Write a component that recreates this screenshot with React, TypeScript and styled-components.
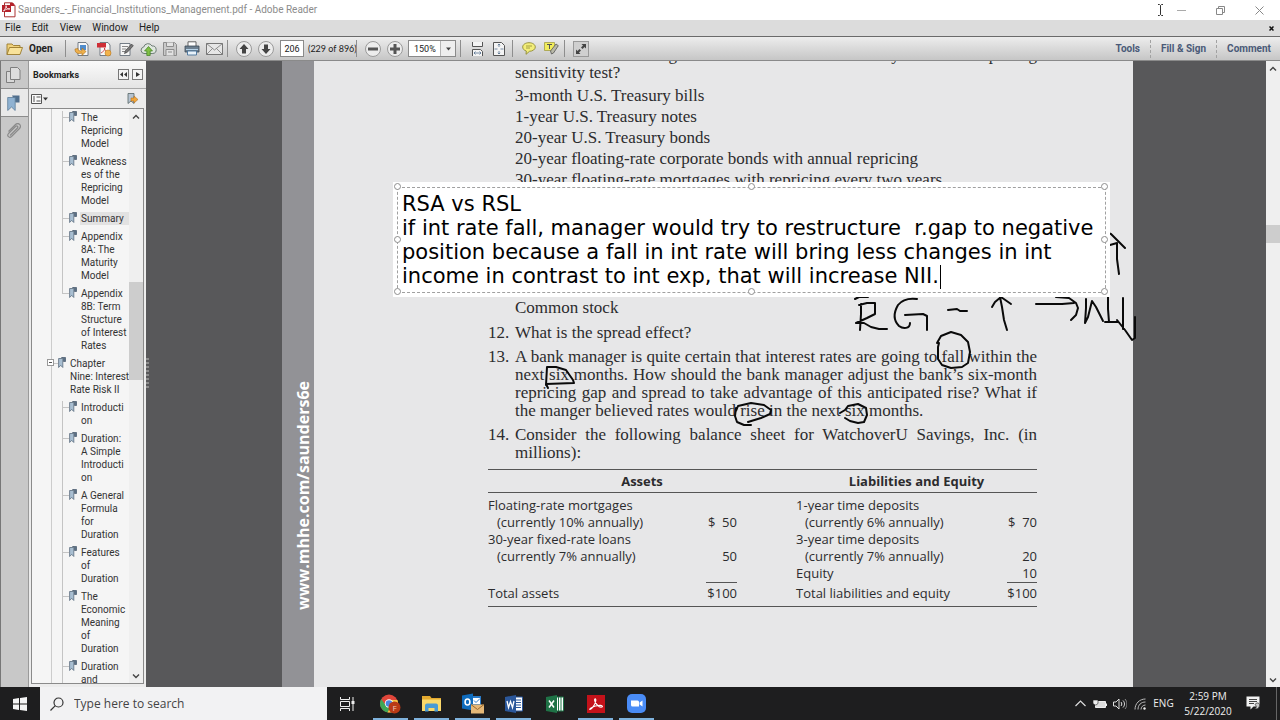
import React from 'react';
import styled, { createGlobalStyle, css } from 'styled-components';

const ui = '"Open Sans", "Noto Sans", sans-serif';
const chrome = 'Roboto, "Open Sans", sans-serif';
const serif = '"Liberation Serif", serif';
const verdana = '"DejaVu Sans", sans-serif';

const GlobalStyle = createGlobalStyle`
  * { box-sizing: border-box; }
  body { margin: 0; background: #58585a; font-family: ${ui}; }
  button, input, select, textarea { font: inherit; color: inherit; margin: 0; padding: 0; border: 0; border-radius: 0; background: none; outline: 0; }
  ul, ol { list-style: none; margin: 0; padding: 0; }
  svg { display: block; flex: none; }
  a { color: inherit; text-decoration: none; }
`;

const Shell = styled.div`
  display: flex;
  flex-direction: column;
  height: 100vh;
  overflow: hidden;
`;

/* ---------- window chrome ---------- */

const TitleBar = styled.header`
  display: flex;
  align-items: center;
  flex: none;
  height: 20px;
  padding: 0 15px 0 2px;
  gap: 2px;
  background: #fff;
  color: #8c8c8c;
  font-family: ${chrome};
  line-height: 16px;
`;
const WindowTitle = styled.h1`
  flex: 1;
  margin: 0;
  font-size: 10px;
  font-weight: 400;
  white-space: nowrap;
`;
const WindowButtons = styled.div`
  display: flex;
  align-items: center;
  gap: 27px;
  padding-left: 9px;
`;
const ChromeButton = styled.button`
  display: flex;
  align-items: center;
  justify-content: center;
  width: 12px;
  height: 14px;
`;
const MenuBar = styled.nav`
  display: flex;
  align-items: center;
  flex: none;
  height: 16px;
  padding: 0 5px;
  gap: 11px;
  background: #dcdcdc;
  color: #222;
  font-family: ${chrome};
  font-size: 10px;
  line-height: 16px;
`;
const MenuClose = styled(ChromeButton)`
  margin-left: auto;
  width: 8px;
`;

/* ---------- toolbar ---------- */

const Toolbar = styled.div`
  display: flex;
  align-items: center;
  flex: none;
  height: 25px;
  padding: 0 9px 0 6px;
  border-top: 1px solid #6a6a6a;
  border-bottom: 1px solid #8a8a8a;
  background: linear-gradient(#ededed, #c6c6c6);
  font-family: ${chrome};
  font-size: 10px;
  line-height: 14px;
  color: #222;
`;
const OpenButton = styled.button`
  display: flex;
  align-items: center;
  gap: 6px;
  width: 57px;
  font-weight: 700;
`;
const Divider = styled.span`
  flex: none;
  width: 1px;
  height: 17px;
  margin: 0 5px 0 2px;
  background: #8e8e8e;
`;
const Tool = styled.button`
  display: flex;
  align-items: center;
  justify-content: center;
  flex: none;
  width: 22px;
  height: 22px;
`;
const RoundTool = styled(Tool)`
  width: 16px;
  height: 16px;
  margin: 0 3px;
  border: 1px solid #9a9a9a;
  border-radius: 50%;
  background: #ececec;
`;
const BoxedTool = styled(Tool)`
  width: 16px;
  height: 16px;
  margin: 0 3px;
  border: 1px solid #999;
  background: #cfcfcf;
`;
const PageInput = styled.input`
  flex: none;
  width: 24px;
  height: 17px;
  margin: 0 4px 0 3px;
  border: 1px solid #8a8a8a;
  background: #fff;
  text-align: center;
  font-size: 9px;
`;
const PageCount = styled.span`
  flex: none;
  width: 46px;
  font-family: Lato, ${chrome};
  font-size: 9px;
  white-space: nowrap;
`;
const ZoomBox = styled.label`
  display: flex;
  align-items: center;
  flex: none;
  width: 48px;
  height: 17px;
  margin: 0 2px;
  border: 1px solid #8a8a8a;
  background: #fff;
`;
const ZoomSelect = styled.select`
  appearance: none;
  flex: 1;
  min-width: 0;
  height: 15px;
  padding-left: 5px;
  font-size: 9px;
`;
const ZoomArrow = styled.span`
  display: flex;
  align-items: center;
  justify-content: center;
  width: 15px;
  height: 15px;
  border-left: 1px solid #b5b5b5;
  background: #eee;
`;
const TaskLinks = styled.div`
  display: flex;
  margin-left: auto;
`;
const TaskLink = styled.button`
  height: 18px;
  padding: 0 10px;
  color: #4a5a78;
  font-size: 10px;
  font-weight: 700;
  white-space: nowrap;
  & + & { border-left: 1px dashed #a2a2a2; }
  &:last-child { padding-right: 0; }
`;

/* ---------- side panel ---------- */

const Workspace = styled.div`
  display: flex;
  flex: 1;
  min-height: 0;
  background: #58585a;
`;
const TabStrip = styled.nav`
  display: flex;
  flex-direction: column;
  flex: none;
  width: 28px;
  border-left: 1px solid #777;
  background: #c8c8c8;
`;
const PanelTab = styled.button<{ $active?: boolean }>`
  display: flex;
  align-items: center;
  justify-content: center;
  height: 28px;
  padding-right: 3px;
  border-bottom: 1px solid #8c8c8c;
  ${p => p.$active && css`background: #e9e9e9;`}
  &:last-child { border-bottom: 0; }
`;
const Panel = styled.aside`
  display: flex;
  flex-direction: column;
  flex: none;
  width: 118px;
  border-left: 1px solid #9a9a9a;
  background: #ececec;
  font-family: ${chrome};
`;
const PanelHeader = styled.div`
  display: flex;
  align-items: center;
  flex: none;
  gap: 3px;
  height: 28px;
  padding: 0 3px 0 4px;
  border-bottom: 1px solid #a8a8a8;
  background: linear-gradient(#fafafa, #e4e4e4);
`;
const PanelTitle = styled.h2`
  flex: 1;
  margin: 0;
  color: #222;
  font-size: 9px;
  line-height: 14px;
  font-weight: 700;
`;
const SmallButton = styled.button`
  display: flex;
  align-items: center;
  justify-content: center;
  width: 11px;
  height: 11px;
  border: 1px solid #777;
  background: #f4f4f4;
`;
const PanelTools = styled.div`
  display: flex;
  align-items: center;
  justify-content: space-between;
  flex: none;
  height: 19px;
  padding: 0 8px 0 2px;
`;
const TreeBox = styled.div`
  display: flex;
  flex: 1;
  min-height: 0;
  margin: 0 2px 3px 2px;
  border: 1px solid #8a8a8a;
  background: #f5f5f5;
`;
const Tree = styled.div`
  flex: 1;
  min-width: 0;
  overflow: hidden;
  padding-left: 19px;
  color: #333;
  font-size: 10px;
  line-height: 13px;
`;
const Trunk = styled.div`
  padding-top: 2px;
  border-left: 1px solid #ccc;
`;
const BranchList = styled.ul`
  padding-left: 10px;
`;
const Connector = styled.span`
  flex: none;
  width: 6px;
  height: 7px;
  border-bottom: 1px solid #c4c4c4;
`;
const Leaf = styled.li<{ $end?: boolean }>`
  display: flex;
  align-items: flex-start;
  padding-bottom: 5px;
  border-left: 1px solid ${p => (p.$end ? 'transparent' : '#c4c4c4')};
  ${p => p.$end && css`
    ${Connector} { width: 7px; margin-left: -1px; border-left: 1px solid #c4c4c4; }
  `}
`;
const Chapter = styled.div`
  display: flex;
  align-items: flex-start;
  margin-left: -5px;
  padding-bottom: 5px;
  ${Connector} { width: 4px; }
`;
const Toggle = styled.button`
  display: flex;
  align-items: center;
  justify-content: center;
  flex: none;
  width: 7px;
  height: 7px;
  margin-top: 2px;
  border: 1px solid #999;
  background: #fff;
`;
const BookmarkText = styled.a<{ $selected?: boolean }>`
  flex: 1;
  margin-left: 3px;
  padding-left: 1px;
  white-space: nowrap;
  ${p => p.$selected && css`background: #e2e2e2;`}
`;
const Line = styled.span`
  display: block;
`;
const ScrollTrack = styled.div`
  display: flex;
  flex-direction: column;
  align-items: center;
  justify-content: space-between;
  flex: none;
  width: 14px;
  background: #efefef;
`;
const ScrollArrow = styled.button`
  display: flex;
  align-items: center;
  justify-content: center;
  width: 14px;
  height: 15px;
`;
const ScrollRun = styled.div<{ $before: number; $after: number }>`
  display: grid;
  flex: 1;
  align-self: stretch;
  grid-template-rows: ${p => p.$before}fr ${p => 100 - p.$before - p.$after}fr ${p => p.$after}fr;
`;
const ScrollThumb = styled.span`
  grid-row: 2;
  background: #cdcdcd;
`;
const Splitter = styled.div`
  display: flex;
  align-items: center;
  flex: none;
  width: 3px;
`;
const Grip = styled.span`
  width: 3px;
  height: 32px;
  background: repeating-linear-gradient(#8c8c8c 0 2px, transparent 2px 4px);
`;

/* ---------- document ---------- */

const Viewer = styled.main`
  display: flex;
  justify-content: center;
  flex: 1;
  min-width: 0;
  overflow: hidden;
`;
const Sheet = styled.article`
  position: relative;
  display: flex;
  flex: none;
  width: 851px;
  height: 100%;
`;
const Spine = styled.div`
  display: flex;
  justify-content: center;
  flex: none;
  width: 32px;
  padding-top: 320px;
  padding-left: 9px;
  background: #929296;
`;
const SpineLink = styled.a`
  align-self: flex-start;
  writing-mode: vertical-rl;
  transform: rotate(180deg);
  color: #fff;
  font-size: 16px;
  line-height: 16px;
  font-weight: 700;
  white-space: nowrap;
`;
const Paper = styled.div`
  flex: 1;
  padding: 0 96px 0 174px;
  background: #e7e7e8;
  color: #2c2c2e;
  font-family: ${serif};
  font-size: 17px;
  line-height: 18px;
`;
const Question = styled.li<{ $clipped?: boolean }>`
  display: grid;
  grid-template-columns: 27px 1fr;
  margin-bottom: 6px;
  ${p => p.$clipped && css`margin-top: -15px;`}
`;
const QuestionBody = styled.div`
  grid-column: 2;
`;
const Justified = styled.span<{ $last?: boolean }>`
  display: block;
  white-space: nowrap;
  text-align-last: ${p => (p.$last ? 'left' : 'justify')};
`;
const Choices = styled.ul`
  padding-top: 3px;
  line-height: 21px;
`;
const LastChoice = styled.li`
  margin-top: 107px;
`;
const Sheets = styled.table`
  width: 100%;
  margin-top: 7px;
  border-collapse: collapse;
  table-layout: fixed;
  border-top: 1px solid #555;
  border-bottom: 1px solid #555;
  font-family: ${ui};
  font-size: 13px;
  line-height: 17px;
  th { height: 23px; padding: 0; border-bottom: 1px solid #555; font-weight: 700; }
  td { padding: 0; white-space: nowrap; }
  tbody tr:first-child td { padding-top: 4px; }
`;
const Amount = styled.td`
  text-align: right;
  white-space: pre !important;
`;
const Detail = styled.td`
  text-indent: 9px;
`;
const TotalRow = styled.tr`
  td { padding: 2px 0 4px; }
  ${Amount} { border-top: 1px solid #555; }
`;
const Ink = styled.svg`
  position: absolute;
  top: 0;
  left: 0;
  overflow: visible;
  pointer-events: none;
`;
const Note = styled.div`
  position: absolute;
  top: 121px;
  left: 111px;
  width: 717px;
  padding: 5px 4px 4px;
  background: #fff;
`;
const NoteText = styled.textarea`
  display: block;
  width: 100%;
  height: 106px;
  padding: 4px 4px;
  border: 1px dashed #a0a0a0;
  resize: none;
  overflow: hidden;
  color: #000;
  font-family: ${verdana};
  font-size: 21px;
  line-height: 24px;
  white-space: pre;
`;
const Handle = styled.span<{ $x: 0 | 50 | 100; $y: 0 | 50 | 100 }>`
  position: absolute;
  left: calc(5px + (100% - 10px) * ${p => p.$x / 100});
  top: calc(5px + (100% - 10px) * ${p => p.$y / 100});
  width: 7px;
  height: 7px;
  margin: -4px;
  border: 1px solid #8e8e8e;
  border-radius: 50%;
  background: #fff;
`;
const Caret = styled.span`
  position: absolute;
  left: 547px;
  bottom: 8px;
  width: 1px;
  height: 24px;
  background: #000;
`;

/* ---------- taskbar ---------- */

const Taskbar = styled.footer`
  display: flex;
  align-items: stretch;
  flex: none;
  height: 33px;
  background: #1e1e1f;
  color: #eee;
`;
const TaskButton = styled.button<{ $open?: boolean }>`
  display: flex;
  align-items: center;
  justify-content: center;
  flex: none;
  width: 35px;
  margin: 0 3px;
  border-top: 2px solid transparent;
  border-bottom: 2px solid ${p => (p.$open ? '#7fb2dc' : 'transparent')};
`;
const StartButton = styled(TaskButton)`
  width: 40px;
  margin: 0;
`;
const AppList = styled.div`
  display: flex;
  align-items: stretch;
  margin-left: 2px;
`;
const SearchBox = styled.label`
  display: flex;
  align-items: center;
  flex: none;
  gap: 10px;
  width: 287px;
  padding-left: 10px;
  background: #f2f2f3;
  color: #333;
`;
const SearchInput = styled.input`
  flex: 1;
  min-width: 0;
  font-size: 12px;
  line-height: 16px;
  &::placeholder { color: #444; opacity: 1; }
`;
const Tray = styled.div`
  display: flex;
  align-items: center;
  margin-left: auto;
  font-size: 10px;
  line-height: 15px;
`;
const TrayButton = styled.button`
  display: flex;
  align-items: center;
  justify-content: center;
  width: 20px;
  height: 33px;
`;
const Language = styled(TrayButton)`
  width: 27px;
`;
const Clock = styled.time`
  width: 62px;
  text-align: center;
`;
const Notices = styled(TrayButton)`
  width: 28px;
`;
const ShowDesktop = styled.button`
  width: 4px;
  height: 33px;
  margin-left: 9px;
  border-left: 1px solid #666;
`;

/* ---------- drawings ---------- */

const BookmarkIcon = () => (
  <svg width="8" height="11" viewBox="0 0 8 11">
    <path d="M3.5.5h4v4h-2v-3z" fill="#5b7085" stroke="#46586b" strokeWidth=".7" />
    <path d="M.6 1.5h4.2v9L2.7 8.4.6 10.5z" fill="#a9bfd2" stroke="#5a6c7e" strokeWidth=".8" />
  </svg>
);

const Chevron = ({ up }: { up?: boolean }) => (
  <svg width="8" height="6" viewBox="0 0 8 6" fill="none" stroke="#444" strokeWidth="1.4">
    <path d={up ? 'M1 4.5 4 1.5l3 3' : 'M1 1.5l3 3 3-3'} />
  </svg>
);

const PageSheet = () => <path d="M4 1.5h8l2 2.500v10.500H4z" fill="#f8f8f8" stroke="#66707a" strokeWidth=".9" />;

const PenStroke = styled.g`
  fill: none;
  stroke: #0a0a0a;
  stroke-width: 2px;
  stroke-linecap: round;
  stroke-linejoin: round;
`;

const Handwriting = () => (
  <Ink width="856" height="626" viewBox="282 61 856 626" aria-hidden="true">
    <PenStroke>
      <path d="M1108 233l3 1 14 14M1110 245l7-2M1117 243v16l2 15" />
      <path d="M855 299l4-2h9M861 304v10l-1 16M859 305l8-2 8 0 0 11-8 4-11 5h8l7 4 8 2 8 0" />
      <path d="M917 299c-8-1-15 1-19 6-4 7-5 15 1 21 4 3 11 3 11-3M905 315l18-1 4 2v14" />
      <path d="M948 310l9-1 3 2h7" />
      <path d="M1000 297l2 10 2 13 3 10M992 307l3-5 6-5 10 7" />
      <path d="M1036 304h26l12-1M1056 297l13 1 7 5 2 5-2 7-5 5" />
      <path d="M1086 299v9l-1 15 3-6 4-16 4 6 7 14M1108 297v12l1 13M1105 322h13M1123 298v31M1117 320l8 10 7 10 3-2v-21" />
      <path d="M937 343l4-7 10-4 10 3 7 7 2 10-2 11-6 4-11 1-9-3-4-6v-12l1-4" />
      <path d="M546 385l1-18 9 0 10 3 7 10 1 3-28 1 2 4" />
      <path d="M736 411l2-5 13-3 13 2 7 5-1 4-9 4-13 4M751 425h-7l-7-3-2-6 1-8" />
      <path d="M840 413l5-3 3-4 10-2 8 4 1 7-3 7-6 1-8-2-5-3" />
    </PenStroke>
  </Ink>
);

/* ---------- data ---------- */

const chapterEight = [
  ['The', 'Repricing', 'Model'],
  ['Weakness', 'es of the', 'Repricing', 'Model'],
  ['Summary'],
  ['Appendix', '8A: The', 'Maturity', 'Model'],
  ['Appendix', '8B: Term', 'Structure', 'of Interest', 'Rates'],
];
const chapterNine = [
  ['Introducti', 'on'],
  ['Duration:', 'A Simple', 'Introducti', 'on'],
  ['A General', 'Formula', 'for', 'Duration'],
  ['Features', 'of', 'Duration'],
  ['The', 'Economic', 'Meaning', 'of', 'Duration'],
  ['Duration', 'and'],
];

const noteText = [
  'RSA vs RSL',
  'if int rate fall, manager would try to restructure  r.gap to negative',
  'position because a fall in int rate will bring less changes in int',
  'income in contrast to int exp, that will increase NII.',
].join('\n');

const handles: [0 | 50 | 100, 0 | 50 | 100][] = [
  [0, 0], [50, 0], [100, 0], [0, 50], [100, 50], [0, 100], [50, 100], [100, 100],
];

const Branches = ({ items, open }: { items: string[][]; open?: boolean }) => (
  <BranchList>
    {items.map((lines, i) => (
      <Leaf key={i} $end={!open && i === items.length - 1}>
        <Connector />
        <BookmarkIcon />
        <BookmarkText href="#" $selected={lines[0] === 'Summary'}>
          {lines.map((l, n) => <Line key={n}>{l}</Line>)}
        </BookmarkText>
      </Leaf>
    ))}
  </BranchList>
);

/* ---------- sections ---------- */

const TopBars = () => (
  <>
    <TitleBar>
      <svg width="14" height="16" viewBox="0 0 14 16">
        <path d="M2.5.8h8l2.5 3v11H2.5z" fill="#fff" stroke="#a33" />
        <path d="M0 3h9v7H0z" fill="#b5222b" />
        <path d="M1.5 9C3 7 4.500 5 4.300 4c-.4-1-.9.4.4 2 1 1.200 3 1.500 3.300.8-.5-.6-4 .2-6.500 2.200z" fill="none" stroke="#fff" strokeWidth=".8" />
        <path d="M8 1h3l2 3h-5z" fill="#b5222b" />
      </svg>
      <WindowTitle>Saunders_-_Financial_Institutions_Management.pdf - Adobe Reader</WindowTitle>
      <svg width="7" height="12" viewBox="0 0 7 12" fill="none" stroke="#333">
        <path d="M1 .5h1.500l1 1 1-1H6M3.500 1.500v9M1 11.500h1.500l1-1 1 1H6" />
      </svg>
      <WindowButtons>
        <ChromeButton aria-label="Minimize">
          <svg width="9" height="9" viewBox="0 0 9 9"><path d="M0 4.500h9" stroke="#aaa" /></svg>
        </ChromeButton>
        <ChromeButton aria-label="Restore">
          <svg width="9" height="9" viewBox="0 0 9 9" fill="none" stroke="#888"><path d="M.5 2.500h6v6h-6zM2.500 2.500v-2h6v6h-2" /></svg>
        </ChromeButton>
        <ChromeButton aria-label="Close">
          <svg width="9" height="9" viewBox="0 0 9 9" stroke="#888"><path d="M.5.5l8 8M8.500.5l-8 8" /></svg>
        </ChromeButton>
      </WindowButtons>
    </TitleBar>
    <MenuBar>
      {['File', 'Edit', 'View', 'Window', 'Help'].map(m => <button key={m}>{m}</button>)}
      <MenuClose aria-label="Close document">
        <svg width="5" height="5" viewBox="0 0 5 5" stroke="#111" strokeWidth="1.500"><path d="M.5.5l4 4M4.500.5l-4 4" /></svg>
      </MenuClose>
    </MenuBar>
  </>
);

const ReaderToolbar = () => (
  <Toolbar role="toolbar">
    <OpenButton>
      <svg width="17" height="14" viewBox="0 0 17 14">
        <path d="M1 12.500V2h5l1.500 1.500H14V6" fill="#f0d27c" stroke="#9a7a2c" strokeWidth=".9" />
        <path d="M1 12.500 3.500 5.500h13L14 12.500z" fill="#f8e29a" stroke="#9a7a2c" strokeWidth=".9" />
      </svg>
      Open
    </OpenButton>
    <Divider />
    <Tool aria-label="Convert file to PDF online">
      <svg width="16" height="16" viewBox="0 0 16 16"><PageSheet /><path d="M6 4h6v5H6z" fill="#4f8ccc" /><path d="M1 8c0 5 4 5 7 4v2.500l4-4-4-3.500v2.500c-3 1-4 0-4-2z" fill="#eeb04c" stroke="#a96d18" strokeWidth=".6" /></svg>
    </Tool>
    <Tool aria-label="Create PDF">
      <svg width="16" height="16" viewBox="0 0 16 16"><PageSheet /><path d="M1 2h9v4.500H1z" fill="#cf2f37" /><path d="M5 12c3-2 4-3 3.500-5 0 3 2 4 4 4" fill="none" stroke="#c33" strokeWidth=".8" /><circle cx="12" cy="12" r="3" fill="#f2b24a" stroke="#c07a20" strokeWidth=".6" /></svg>
    </Tool>
    <Tool aria-label="Sign">
      <svg width="16" height="16" viewBox="0 0 16 16"><path d="M2 2.500h10v12H2z" fill="#f6f6f6" stroke="#66707a" strokeWidth=".9" /><path d="M4 5.500h6M4 8h4M4 10.500h3" stroke="#888" /><path d="M6.500 12.500l1-3 6-6.500 1.800 1.800-6 6.500z" fill="#777" stroke="#333" strokeWidth=".6" /></svg>
    </Tool>
    <Tool aria-label="Upload">
      <svg width="17" height="16" viewBox="0 0 17 16"><path d="M4 12.500a3.300 3.300 0 0 1-.3-6.500A4.500 4.500 0 0 1 12 5a3.700 3.700 0 0 1 .8 7.500z" fill="#dfe6df" stroke="#60706a" strokeWidth=".9" /><path d="M8.500 5.500l4 4.500h-2.300v4.500H6.800V10H4.500z" fill="#7fbf45" stroke="#3f7f20" strokeWidth=".7" /></svg>
    </Tool>
    <Tool aria-label="Save">
      <svg width="14" height="14" viewBox="0 0 14 14" fill="none" stroke="#8d8d8d"><path d="M.5.5h11l2 2v11H.5z" fill="#cacaca" /><path d="M3.500.5v4h7v-4M3 13.500V7.500h8v6M5 10h4" fill="#e2e2e2" /></svg>
    </Tool>
    <Tool aria-label="Print">
      <svg width="16" height="15" viewBox="0 0 16 15"><path d="M4 5V.8h8V5" fill="#fff" stroke="#555" strokeWidth=".9" /><path d="M1 5h14v6H1z" fill="#6c7f90" stroke="#3d4a56" strokeWidth=".8" /><path d="M2 8.500h12" stroke="#b7d3e8" /><path d="M3.500 10h9v4h-9z" fill="#e8f2fa" stroke="#47729a" strokeWidth=".9" /></svg>
    </Tool>
    <Tool aria-label="Email">
      <svg width="17" height="12" viewBox="0 0 17 12" fill="none" stroke="#777"><path d="M.5.5h16v11H.5z" fill="#e6e6e6" /><path d="M.5.5l8 6.500 8-6.500M.5 11.500l6-6M16.500 11.500l-6-6" strokeWidth=".8" /></svg>
    </Tool>
    <Divider />
    <RoundTool aria-label="Previous page">
      <svg width="10" height="10" viewBox="0 0 10 10"><path d="M5 0l4.500 5H7v4.500H3V5H.5z" fill="#444" /></svg>
    </RoundTool>
    <RoundTool aria-label="Next page">
      <svg width="10" height="10" viewBox="0 0 10 10"><path d="M5 10l4.500-5H7V.5H3V5H.5z" fill="#444" /></svg>
    </RoundTool>
    <PageInput aria-label="Page number" defaultValue="206" />
    <PageCount>(229 of 896)</PageCount>
    <Divider />
    <RoundTool aria-label="Zoom out">
      <svg width="10" height="10" viewBox="0 0 10 10"><path d="M0 3.500h10v3H0z" fill="#555" /></svg>
    </RoundTool>
    <RoundTool aria-label="Zoom in">
      <svg width="10" height="10" viewBox="0 0 10 10"><path d="M0 3.500h3.500V0h3v3.500H10v3H6.500V10h-3V6.500H0z" fill="#555" /></svg>
    </RoundTool>
    <ZoomBox>
      <ZoomSelect aria-label="Zoom level" defaultValue="150%"><option>150%</option></ZoomSelect>
      <ZoomArrow><svg width="5" height="4" viewBox="0 0 5 4"><path d="M0 .5h5L2.500 3.500z" fill="#444" /></svg></ZoomArrow>
    </ZoomBox>
    <Divider />
    <Tool aria-label="Fit width">
      <svg width="13" height="14" viewBox="0 0 13 14" fill="none" stroke="#555"><path d="M1.500 0v4.500h10V0M1.500 14V7.500h8l2 2V14" fill="#f4f4f4" /><path d="M3 11h7M4.500 9.500L3 11l1.500 1.500M8.500 9.500L10 11l-1.500 1.500" stroke="#55718f" strokeWidth=".8" /></svg>
    </Tool>
    <Tool aria-label="Fit page">
      <svg width="12" height="14" viewBox="0 0 12 14" fill="none" stroke="#555"><path d="M.5.5h8l3 3v10H.5z" fill="#f4f4f4" /><path d="M6 2v3M6 12V9M1.500 7h3M10.500 7h-3M4.800 3.200L6 2l1.200 1.200M4.800 10.800L6 12l1.200-1.200" stroke="#55718f" strokeWidth=".8" /></svg>
    </Tool>
    <Divider />
    <Tool aria-label="Add sticky note">
      <svg width="14" height="13" viewBox="0 0 14 13"><path d="M7 .7c3.600 0 6.300 1.900 6.300 4.300S10.600 9.300 7.500 9.300L4 12.300 4.300 9C2 8.300.7 6.900.7 5 .7 2.600 3.400.7 7 .7z" fill="#f3ee7a" stroke="#8f8a35" strokeWidth=".9" /><path d="M4 4h6M4 6h4" stroke="#8f8a35" strokeWidth=".8" /></svg>
    </Tool>
    <Tool aria-label="Highlight text">
      <svg width="15" height="13" viewBox="0 0 15 13"><path d="M.5.5h10v8H.5z" fill="#f1ec5a" stroke="#99933a" strokeWidth=".7" /><path d="M3 2.500h5M5.500 2.500v4.500" stroke="#555" /><path d="M7.500 12l-1-3L12 2l2.300 1.700L9.500 11z" fill="#b9b9a8" stroke="#555" strokeWidth=".8" /></svg>
    </Tool>
    <Divider />
    <BoxedTool aria-label="Read mode">
      <svg width="12" height="12" viewBox="0 0 12 12"><path d="M6.500 1H11v4.500L9.500 4 7.500 6 6 4.500l2-2zM5.500 11H1V6.500L2.500 8l2-2L6 7.500l-2 2z" fill="#444" /></svg>
    </BoxedTool>
    <TaskLinks>
      <TaskLink>Tools</TaskLink>
      <TaskLink>Fill &amp; Sign</TaskLink>
      <TaskLink>Comment</TaskLink>
    </TaskLinks>
  </Toolbar>
);

const SidePanel = () => (
  <>
    <TabStrip>
      <PanelTab aria-label="Page thumbnails">
        <svg width="15" height="16" viewBox="0 0 15 16" fill="#d8d8d8" stroke="#7e7e7e"><path d="M.5 4.500h8v11h-8z" /><path d="M4.500.5h7l2.500 2.500v9.500H4.500z" fill="#ddd" /></svg>
      </PanelTab>
      <PanelTab $active aria-label="Bookmarks">
        <svg width="13" height="16" viewBox="0 0 13 16"><path d="M5 .5h7.500v7h-4z" fill="#506f8d" /><path d="M.7 2.500h7.500v13L4.500 12 .7 15.500z" fill="#8fb2d2" stroke="#5e7d99" strokeWidth=".8" /></svg>
      </PanelTab>
      <PanelTab aria-label="Attachments">
        <svg width="15" height="16" viewBox="0 0 15 16" fill="none" stroke="#8a8a8a" strokeWidth="1.200"><path d="M4 12.500L11.500 5c1-1.500-.5-2.700-1.700-1.700L2.500 10.500c-2 2.500.8 5 3 3l8-8c2.500-3-1-6.500-4-4L2.500 8.500" /></svg>
      </PanelTab>
    </TabStrip>
    <Panel>
      <PanelHeader>
        <PanelTitle>Bookmarks</PanelTitle>
        <SmallButton aria-label="Collapse panel"><svg width="7" height="5" viewBox="0 0 7 5"><path d="M3 0v5L0 2.500zM7 0v5L4 2.500z" fill="#333" /></svg></SmallButton>
        <SmallButton aria-label="Expand panel"><svg width="4" height="5" viewBox="0 0 4 5"><path d="M0 0v5l4-2.500z" fill="#333" /></svg></SmallButton>
      </PanelHeader>
      <PanelTools>
        <button aria-label="Bookmark options"><svg width="17" height="10" viewBox="0 0 17 10" fill="none" stroke="#555"><path d="M.5.5h10v9H.5z" fill="#fafafa" /><path d="M2 3h2M2 5h2M2 7h2M5.500 3h4M5.500 7h4" /><path d="M12 3.500h5L14.500 6.500z" fill="#333" stroke="none" /></svg></button>
        <button aria-label="New bookmark"><svg width="11" height="11" viewBox="0 0 11 11"><path d="M1 .5h6v10L4 8l-3 2.500z" fill="#b6c3d0" stroke="#566" strokeWidth=".8" /><path d="M4 5h3V3l4 3.500L7 10V8H4z" fill="#f0a53a" stroke="#a8661a" strokeWidth=".5" /></svg></button>
      </PanelTools>
      <TreeBox>
        <Tree>
          <Trunk>
            <Branches items={chapterEight} />
            <Chapter>
              <Toggle aria-label="Collapse chapter"><svg width="3" height="1" viewBox="0 0 3 1"><path d="M0 0h3v1H0z" fill="#555" /></svg></Toggle>
              <Connector />
              <BookmarkIcon />
              <BookmarkText href="#"><Line>Chapter</Line><Line>Nine: Interest</Line><Line>Rate Risk II</Line></BookmarkText>
            </Chapter>
            <Branches items={chapterNine} open />
          </Trunk>
        </Tree>
        <ScrollTrack>
          <ScrollArrow aria-label="Scroll up"><Chevron up /></ScrollArrow>
          <ScrollRun $before={29} $after={53}><ScrollThumb /></ScrollRun>
          <ScrollArrow aria-label="Scroll down"><Chevron /></ScrollArrow>
        </ScrollTrack>
      </TreeBox>
    </Panel>
    <Splitter><Grip /></Splitter>
  </>
);

const BalanceSheet = () => (
  <Sheets>
    <colgroup>
      <col width="218" /><col width="31" /><col width="59" /><col width="211" /><col width="30" />
    </colgroup>
    <thead>
      <tr><th colSpan={3}>Assets</th><th colSpan={2}>Liabilities and Equity</th></tr>
    </thead>
    <tbody>
      <tr><td>Floating-rate mortgages</td><Amount /><td /><td>1-year time deposits</td><Amount /></tr>
      <tr><Detail>(currently 10% annually)</Detail><Amount>$  50</Amount><td /><Detail>(currently 6% annually)</Detail><Amount>$  70</Amount></tr>
      <tr><td>30-year fixed-rate loans</td><Amount /><td /><td>3-year time deposits</td><Amount /></tr>
      <tr><Detail>(currently 7% annually)</Detail><Amount>50</Amount><td /><Detail>(currently 7% annually)</Detail><Amount>20</Amount></tr>
      <tr><td /><Amount /><td /><td>Equity</td><Amount>10</Amount></tr>
      <TotalRow><td>Total assets</td><Amount>$100</Amount><td /><td>Total liabilities and equity</td><Amount>$100</Amount></TotalRow>
    </tbody>
  </Sheets>
);

const QuestionList = styled.ol`
  ${Question}:last-child { margin-bottom: 0; }
`;

const DocumentView = () => (
  <Viewer>
    <Sheet>
      <Spine><SpineLink href="#">www.mhhe.com/saunders6e</SpineLink></Spine>
      <Paper>
        <QuestionList>
          <Question $clipped>
            <QuestionBody>
              <Justified>Which of the following assets or liabilities fit the one-year rate or repricing</Justified>
              <Justified $last>sensitivity test?</Justified>
              <Choices>
                <li>3-month U.S. Treasury bills</li>
                <li>1-year U.S. Treasury notes</li>
                <li>20-year U.S. Treasury bonds</li>
                <li>20-year floating-rate corporate bonds with annual repricing</li>
                <li>30-year floating-rate mortgages with repricing every two years</li>
                <LastChoice>Common stock</LastChoice>
              </Choices>
            </QuestionBody>
          </Question>
          <Question>
            <span>12.</span>
            <QuestionBody>What is the spread effect?</QuestionBody>
          </Question>
          <Question>
            <span>13.</span>
            <QuestionBody>
              <Justified>A bank manager is quite certain that interest rates are going to fall within the</Justified>
              <Justified>next six months. How should the bank manager adjust the bank’s six-month</Justified>
              <Justified>repricing gap and spread to take advantage of this anticipated rise? What if</Justified>
              <Justified $last>the manger believed rates would rise in the next six months.</Justified>
            </QuestionBody>
          </Question>
          <Question>
            <span>14.</span>
            <QuestionBody>
              <Justified>Consider the following balance sheet for WatchoverU Savings, Inc. (in</Justified>
              <Justified $last>millions):</Justified>
            </QuestionBody>
          </Question>
        </QuestionList>
        <BalanceSheet />
      </Paper>
      <Handwriting />
      <Note>
        <NoteText aria-label="Text annotation" spellCheck={false} defaultValue={noteText} />
        {handles.map(([x, y]) => <Handle key={`${x}-${y}`} $x={x} $y={y} />)}
        <Caret />
      </Note>
    </Sheet>
  </Viewer>
);

const SystemTaskbar = () => (
  <Taskbar>
    <StartButton aria-label="Start">
      <svg width="14" height="14" viewBox="0 0 14 14" fill="#f4f4f4"><path d="M0 2l6-.9v5.500H0zM7 1l7-1v6.600H7zM0 7.500h6V13l-6-.9zM7 7.500h7V14l-7-1z" /></svg>
    </StartButton>
    <SearchBox>
      <svg width="14" height="14" viewBox="0 0 14 14" fill="none" stroke="#333" strokeWidth="1.200"><circle cx="8.500" cy="5.500" r="4.500" /><path d="M5.300 8.700L.5 13.500" /></svg>
      <SearchInput type="text" aria-label="Search" placeholder="Type here to search" />
    </SearchBox>
    <TaskButton aria-label="Task view">
      <svg width="15" height="14" viewBox="0 0 15 14" fill="none" stroke="#eee"><path d="M.5 0v2.500h9V0M.5 4.500h9v5h-9zM.5 14v-2.500h9V14M13 0v14" /><path d="M11.500 4h3v3h-3z" fill="#eee" stroke="none" /></svg>
    </TaskButton>
    <AppList>
      <TaskButton $open aria-label="Chrome">
        <svg width="21" height="20" viewBox="0 0 21 20"><circle cx="9" cy="9.500" r="9" fill="#e0463a" /><path d="M1.200 5a9 9 0 0 0 6.300 13.400l3.500-6.500-5.500-1z" fill="#3fa757" /><path d="M9 6h8.400A9 9 0 0 1 7.500 18.400L12 11z" fill="#f6c744" /><circle cx="9" cy="9.500" r="4.200" fill="#fff" /><circle cx="9" cy="9.500" r="3.300" fill="#4a86e0" /><circle cx="14.500" cy="13.500" r="6" fill="#b93a16" /><text x="14.500" y="16.500" fontSize="8" textAnchor="middle" fill="#f3c9b8">F</text></svg>
      </TaskButton>
      <TaskButton $open aria-label="File Explorer">
        <svg width="19" height="16" viewBox="0 0 19 16"><path d="M0 0h8l1.500 2H19v13H0z" fill="#e3a92f" /><path d="M0 3.500h19V15H0z" fill="#fbd96b" /><path d="M3 15.500V9.500a2 2 0 0 1 2-2h9a2 2 0 0 1 2 2v6h-3.500V12h-6v3.500z" fill="#4a9bd4" /></svg>
      </TaskButton>
      <TaskButton $open aria-label="Outlook">
        <svg width="22" height="21" viewBox="0 0 22 21"><path d="M10 3h9v12h-9z" fill="#2a7bc8" /><path d="M11 5h7v6h-7z" fill="#fff" /><path d="M12 7.500l2 2 4-4" fill="none" stroke="#2a7bc8" /><path d="M0 2.500L11 .5v17L0 15.500z" fill="#0f6cbd" /><ellipse cx="5.500" cy="9" rx="2.400" ry="3" fill="none" stroke="#fff" strokeWidth="1.600" /><path d="M9 11.500h13V20.500H9z" fill="#e6b877" /><path d="M9 11.500l6.500 5 6.500-5" fill="none" stroke="#9c6b2c" /></svg>
      </TaskButton>
      <TaskButton $open aria-label="Word">
        <svg width="18" height="18" viewBox="0 0 18 18"><path d="M9 2h8.500v14H9z" fill="#fff" stroke="#2b579a" /><path d="M11 5h5M11 7.500h5M11 10h5M11 12.500h5" stroke="#2b579a" /><path d="M0 2L11 0v18L0 16z" fill="#2b579a" /><path d="M2 6l1.500 6.500L5.500 6.500l2 6L9 6" fill="none" stroke="#fff" strokeWidth="1.300" /></svg>
      </TaskButton>
      <TaskButton aria-label="Excel">
        <svg width="18" height="18" viewBox="0 0 18 18"><path d="M9 2h8.500v14H9z" fill="#fff" stroke="#1f7246" /><path d="M12.500 2v14M15 2v14" stroke="#1f7246" /><path d="M0 2L11 0v18L0 16z" fill="#1f7246" /><path d="M3 5.500l5 7M8 5.500l-5 7" stroke="#fff" strokeWidth="1.500" /></svg>
      </TaskButton>
      <TaskButton $open aria-label="Adobe Reader">
        <svg width="18" height="18" viewBox="0 0 18 18"><path d="M0 0h18v18H0z" fill="#c4121a" /><path d="M3 14.500c2-.5 5-5 5.800-8.500.4-2.500-1.300-3-1.200-.8.3 3 4 6.800 6.500 7 2 0 1.700-1.700-.6-1.800-3-.1-7 1-9.500 2.500-1.300.8-1.500 1.600-1 1.600z" fill="none" stroke="#fff" strokeWidth="1.100" /></svg>
      </TaskButton>
      <TaskButton $open aria-label="Zoom">
        <svg width="19" height="19" viewBox="0 0 19 19"><rect width="19" height="19" rx="5" fill="#4a8cf6" /><path d="M4 6.500h6.500a1.500 1.500 0 0 1 1.500 1.500v4.500H5.500A1.500 1.500 0 0 1 4 11zM12.600 8.500L15.500 6.500v6l-2.900-2z" fill="#fff" /></svg>
      </TaskButton>
    </AppList>
    <Tray>
      <TrayButton aria-label="Show hidden icons"><svg width="11" height="7" viewBox="0 0 11 7" fill="none" stroke="#ddd" strokeWidth="1.200"><path d="M.5 6L5.500 1l5 5" /></svg></TrayButton>
      <TrayButton aria-label="Battery"><svg width="14" height="10" viewBox="0 0 14 10"><path d="M2.500 2.500h10v6h-10z" fill="#ddd" stroke="#eee" /><path d="M13 4.500h1v2.500h-1z" fill="#eee" /><path d="M0 1h5v3.500L3 6H2L0 4.500z" fill="#eee" stroke="#1e1e1f" strokeWidth=".6" /></svg></TrayButton>
      <TrayButton aria-label="Volume"><svg width="14" height="12" viewBox="0 0 14 12" fill="none" stroke="#ddd"><path d="M.5 4h2.500L6 1v10L3 8H.5z" /><path d="M8 4c1 1 1 3 0 4M10 2.500c2 2 2 5 0 7" /><path d="M12 1c2.500 3 2.500 7 0 10" stroke="#888" /></svg></TrayButton>
      <TrayButton aria-label="Network"><svg width="12" height="12" viewBox="0 0 12 12" fill="none" stroke="#bbb"><path d="M1 11.500C1 5.500 5.500 1 11.500 1M4 11.500C4 7 7 4 11.500 4M7 11.500C7 9 9 7 11.500 7" /><circle cx="10.500" cy="10.500" r="1.200" fill="#eee" stroke="none" /></svg></TrayButton>
      <Language>ENG</Language>
      <Clock><Line>2:59 PM</Line><Line>5/22/2020</Line></Clock>
      <Notices aria-label="Notifications"><svg width="15" height="15" viewBox="0 0 15 15"><path d="M.5.500h13v10h-6l-3 3v-3h-4z" fill="#f2f2f2" /><path d="M3 3.500h8M3 5.500h8M3 7.500h5" stroke="#444" /><path d="M9 8.500c2.500-3 5-1 4.500 1.500s-3 3.500-5 2.500c2-.5 2.500-2 .5-4z" fill="#ccc" stroke="#222" strokeWidth=".7" /></svg></Notices>
      <ShowDesktop aria-label="Show desktop" />
    </Tray>
  </Taskbar>
);

export default function App() {
  return (
    <Shell>
      <GlobalStyle />
      <TopBars />
      <ReaderToolbar />
      <Workspace>
        <SidePanel />
        <DocumentView />
        <ScrollTrack>
          <ScrollArrow aria-label="Scroll up"><Chevron up /></ScrollArrow>
          <ScrollRun $before={25} $after={72}><ScrollThumb /></ScrollRun>
          <ScrollArrow aria-label="Scroll down"><Chevron /></ScrollArrow>
        </ScrollTrack>
      </Workspace>
      <SystemTaskbar />
    </Shell>
  );
}
